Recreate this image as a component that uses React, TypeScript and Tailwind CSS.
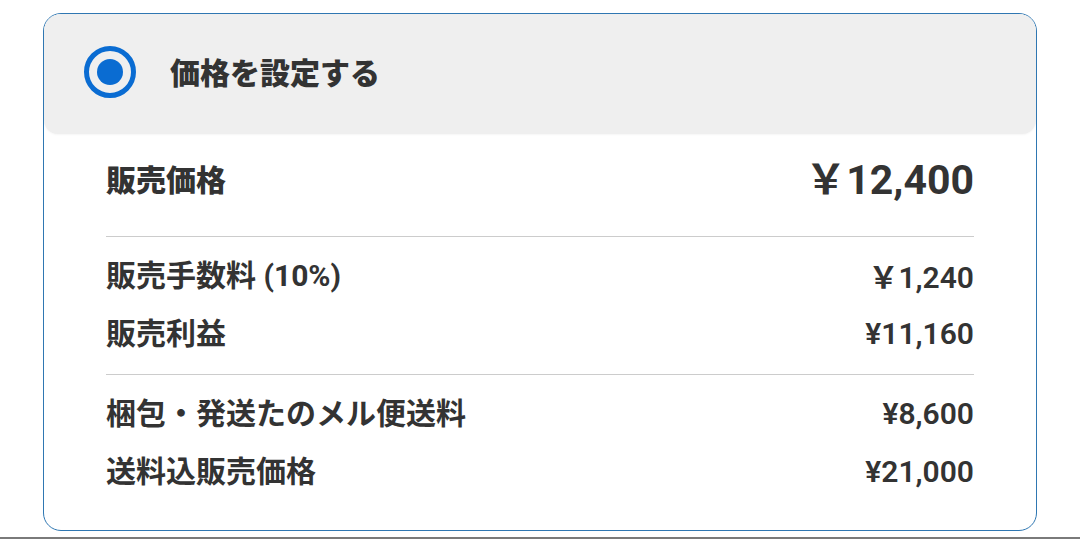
import React from "react";

const jp = { fontFamily: '"Noto Sans CJK JP", "Noto Sans", sans-serif' } as React.CSSProperties;
const lab = { fontFamily: 'Roboto, "Noto Sans CJK JP", sans-serif' } as React.CSSProperties;
const num = { fontFamily: 'Roboto, "Noto Sans CJK JP", sans-serif' } as React.CSSProperties;

function Row({ label, value, fw = false }: { label: string; value: string; fw?: boolean }) {
  return (
    <div className="h-[58px] flex items-center justify-between pb-[2px]">
      <span className="text-[30px] font-bold text-[#333333] leading-none" style={lab}>
        {label}
      </span>
      <span className="text-[30px] font-semibold text-[#333333] leading-none" style={num}>
        {fw ? (
          <>
            <span style={jp} className="font-bold">￥</span>1,240
          </>
        ) : (
          value
        )}
      </span>
    </div>
  );
}

export default function App() {
  return (
    <div className="w-[1080px] h-[539px] bg-white relative overflow-hidden">
      <div className="pt-[13px] pl-[43px]">
        <div className="w-[994px] h-[518px] rounded-[18px] border-[1.5px] border-[#2f77b2] overflow-hidden bg-white">
          <div className="h-[120px] bg-[#efefef] rounded-b-[14px] flex items-center pl-[40px] pb-[6px] shadow-[0_1px_2px_rgba(0,0,0,0.04)]">
            <div className="w-[52px] h-[52px] rounded-full border-[5px] border-[#0a6cd2] flex items-center justify-center mt-[2px]">
              <div className="w-[26px] h-[26px] rounded-full bg-[#0a6cd2]" />
            </div>
            <span className="ml-[34px] text-[30px] font-black text-[#333333] leading-none" style={jp}>
              価格を設定する
            </span>
          </div>
          <div className="px-[62px]">
            <div className="h-[102px] flex items-center justify-between pb-[14px]">
              <span className="text-[30px] font-black text-[#333333] leading-none" style={jp}>
                販売価格
              </span>
              <span className="text-[41px] font-bold text-[#333333] leading-none" style={num}>
                <span style={jp}>￥</span>12,400
              </span>
            </div>
            <div className="h-px bg-[#cccccc]" />
            <div className="pt-[11px] pb-[10px]">
              <Row label="販売手数料 (10%)" value="" fw />
              <Row label="販売利益" value="¥11,160" />
            </div>
            <div className="h-px bg-[#cccccc]" />
            <div className="pt-[11px]">
              <Row label="梱包・発送たのメル便送料" value="¥8,600" />
              <Row label="送料込販売価格" value="¥21,000" />
            </div>
          </div>
        </div>
      </div>
      <div className="absolute left-0 right-0 bottom-0 h-[2px] bg-[#7a7a7a]" />
    </div>
  );
}
